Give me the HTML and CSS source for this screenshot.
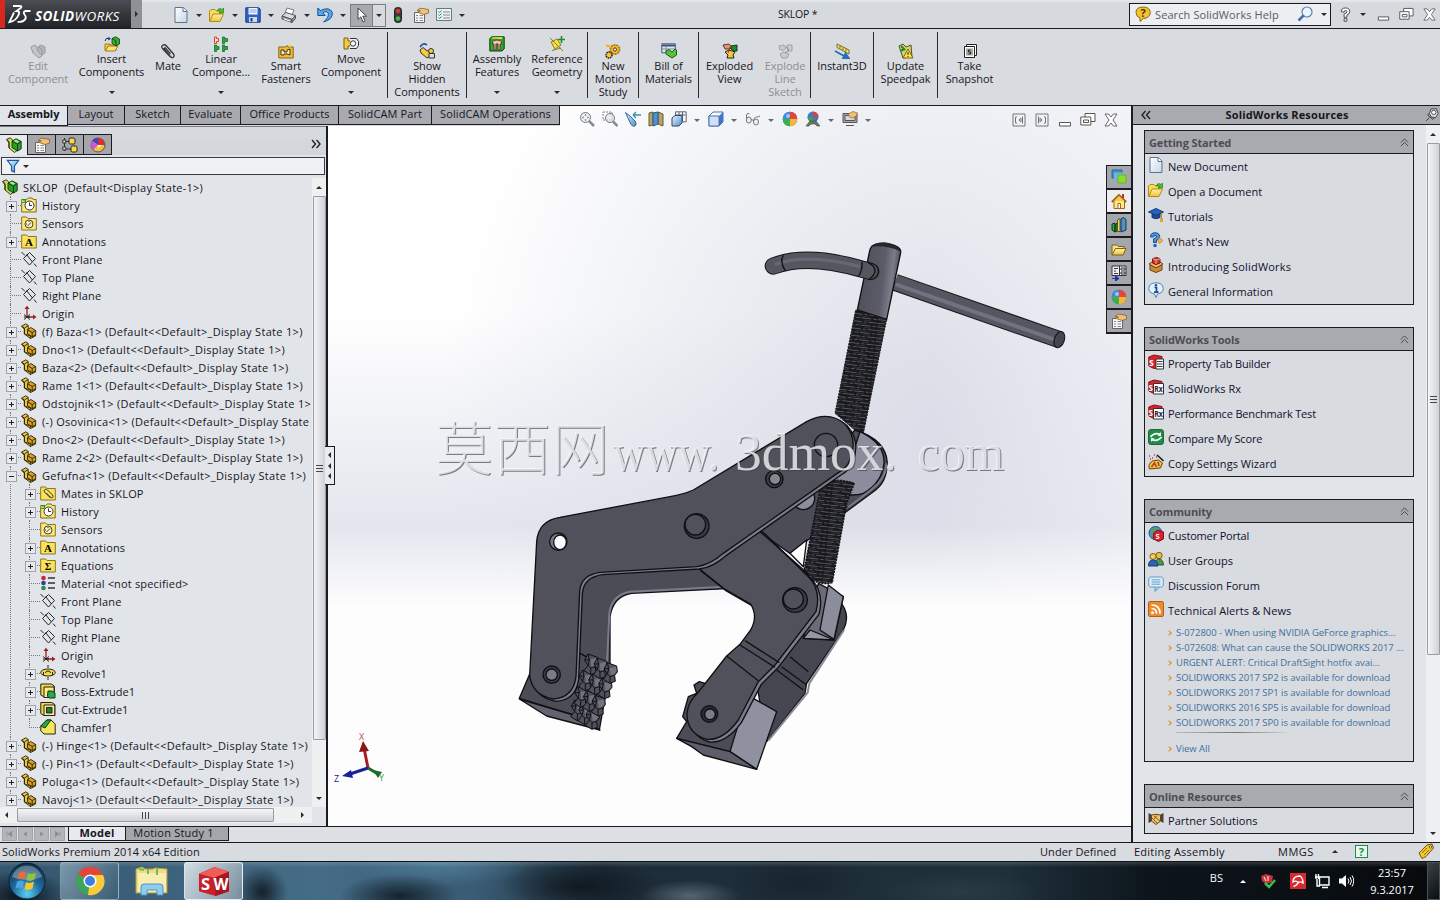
FILE: index.html
```html
<!DOCTYPE html>
<html lang="en">
<head>
<meta charset="UTF-8">
<meta name="viewport" content="width=device-width, initial-scale=1.0">
<title>SKLOP *</title>
<link rel="stylesheet" href="styles.css">
</head>
<body>

<svg class="paints">
  <defs>
    <linearGradient id="gBlue" x1="0" y1="0" x2="1" y2="1"><stop offset="0" stop-color="#e8f4ff"/><stop offset="1" stop-color="#4d8fd0"/></linearGradient>
    <linearGradient id="gPage" x1="0" y1="0" x2="1" y2="1"><stop offset="0" stop-color="#fff"/><stop offset="1" stop-color="#c4d6e8"/></linearGradient>
    <linearGradient id="gFold" x1="0" y1="0" x2="0" y2="1"><stop offset="0" stop-color="#fff3a8"/><stop offset="1" stop-color="#eec23e"/></linearGradient>
  </defs>
</svg>

<!-- icon set, 16x16 -->
<svg class="sprite">
  <symbol id="page" viewBox="0 0 16 16"><path d="M2 .5h8.500l3.500 3.500v11.500H2z" fill="url(#gPage)" stroke="#5b7390"/><path d="M10 .5V4.500h4" fill="#fff" stroke="#5b7390"/></symbol>
  <symbol id="open" viewBox="0 0 16 16"><path d="M.5 14V4l1.500-1.500h4L7.500 4H11v3" fill="#f7dc62" stroke="#b58a14"/><path d="M.8 14.500L4 7h10.500l-3.500 7.500z" fill="url(#gFold)" stroke="#b58a14"/><path d="M8 4q2-4 5-1.500l1.500-1.500v5H10l1.600-1.500Q10 2.800 8 4z" fill="#4fc02c" stroke="#2a7d12" stroke-width=".7"/></symbol>
  <symbol id="folder" viewBox="0 0 16 16"><path d="M1 14V4h5l1.500 1.500H13V8" fill="#f7e08a" stroke="#7d6310"/><path d="M1 14L4.500 7.500H15L12 14z" fill="url(#gFold)" stroke="#7d6310"/></symbol>
  <symbol id="save" viewBox="0 0 16 16"><path d="M.8.8h13l1.400 1.400v13H.8z" fill="#2f62c8" stroke="#163a86"/><path d="M3.500 1h9v6.500h-9z" fill="#eef4ff"/><path d="M4.500 3h7M4.500 5h7" stroke="#8fa6cc"/><path d="M4 10h8v5H4z" fill="#cfd8e8"/><path d="M5.500 11h2v3.500h-2z" fill="#163a86"/></symbol>
  <symbol id="print" viewBox="0 0 16 16"><path d="M4 6l2-5 7 2-2 5z" fill="#fff" stroke="#777"/><path d="M1 9l4-3.500 9.500 3-3.500 4z" fill="#d8dbe0" stroke="#555"/><path d="M1 9v3l10 3.500v-3zM11 12.500v3l3.500-4v-3z" fill="#9da3ad" stroke="#555"/><path d="M3 12l6 2" stroke="#fff"/></symbol>
  <symbol id="undo" viewBox="0 0 16 16"><path d="M.8 1v7.500h7.500L5.800 6Q10 3 11.300 6.500 12 10.500 6.500 15 16 12.500 15.300 5.500 12.500-.8 3.500 3.500z" fill="#5aa7e6" stroke="#1b549c"/></symbol>
  <symbol id="cursor" viewBox="0 0 16 16"><path d="M4 1v11.500l2.800-2.600 2.200 5 2-1-2.200-4.700H12.500z" fill="#fff" stroke="#444"/></symbol>
  <symbol id="light" viewBox="0 0 16 16"><rect x="4.500" y=".5" width="7" height="15" rx="3" fill="#3b3b3b" stroke="#222"/><circle cx="8" cy="4" r="2.200" fill="#e03a2f"/><circle cx="8" cy="11.500" r="2.200" fill="#3fbf4a"/></symbol>
  <symbol id="props" viewBox="0 0 16 16"><path d="M1.500 5.500h10v10h-10z" fill="#f4f6f8" stroke="#666"/><path d="M3 8.500h2M6.500 8.500H10M3 11h2M6.500 11H10M3 13.500h2M6.500 13.500H10" stroke="#888"/><path d="M4 3.500q3-3.500 6-2l5.500 1v3.500l-4.500 1.500L6.500 6q-2.500-1-1-1.500l2-.5z" fill="#f1c27a" stroke="#7d5216" stroke-width=".7"/></symbol>
  <symbol id="options" viewBox="0 0 16 16"><path d="M.5 1.500h15v12H.5z" fill="#e9f1ee" stroke="#5d7d83"/><path d="M2.500 4.500l1 1 2-2M2.500 7.500l1 1 2-2M2.500 10.500l1 1 2-2" stroke="#238080" fill="none"/><path d="M7 5h7M7 8h7M7 11h7" stroke="#888"/></symbol>
  <symbol id="lego" viewBox="0 0 16 16"><g stroke="#26210c" stroke-width=".9" stroke-linejoin="round"><path d="M.6 3.200L4.800.8l2.400 1.700v4.300l7.300 4.200v2L9.500 15.500 3.400 11V6.300z" fill="#f0c53c"/><path d="M.6 3.200l2.800 1.900v5.900l6 2v2.500M3.400 5.100l3.800-2.600" fill="none"/><path d="M6.500 6.800l3.200-2.300 5 3v4.200l-3.500 2-4.700-2.900z" fill="#dba325"/><path d="M6.500 6.800l4.700 2.700v4.200M11.200 9.500l3.500-2" fill="none"/></g></symbol>
  <symbol id="asm" viewBox="0 0 16 16"><g stroke="#1b2b0c" stroke-width=".9" stroke-linejoin="round"><path d="M.6 2.500l3.500-1.700 2.500 2v4l5 4V13L8.500 15.500 3 11V6z" fill="#cfdc55"/><path d="M.6 2.500L3 4.500V11" fill="none"/><path d="M6 4.200l4-2.400 5.200 2.700v7.300L11.500 14 6 10.500z" fill="#24a02c"/><path d="M6 4.200l5.500 3V14M11.500 7.200l3.700-2.700" fill="none"/></g><path d="M7.500 4L10 2.600 13.200 4.500 11.300 6z" fill="#a5e88a"/></symbol>
  <symbol id="editc" viewBox="0 0 16 16"><path d="M1 4l4-2 2 2v3l5 3v3l-3 2-6-5z" fill="#c3c5c9" stroke="#999"/><path d="M8 4l3-2 4 2v6l-3 2-4-3z" fill="#b4b7bb" stroke="#999"/><path d="M8 4l4 2v6" fill="none" stroke="#999"/></symbol>
  <symbol id="insert" viewBox="0 0 16 16"><path d="M1 14.500V8h5l1 1h5v5.500z" fill="#f5c945" stroke="#a37b10"/><path d="M1.500 15L4 10h10l-3 5z" fill="#ffe27a" stroke="#a37b10"/><path d="M8 2.500L11.500.8 15.500 3v5L12 10 8 7.500z" fill="#37ad37" stroke="#0b3d0b" stroke-width=".8"/><path d="M8 2.500l4 2.500v5" fill="none" stroke="#0b3d0b" stroke-width=".8"/><path d="M1 5q1-4 4-2.500" fill="none" stroke="#222"/><path d="M4.500.5L7 3 4 4.500z" fill="#1f47a8"/></symbol>
  <symbol id="clip" viewBox="0 0 16 16"><path d="M10 13.500L2.500 5.500Q1 3 3 2q1.800-.8 3.500 1l7 8q1.200 2-.2 3.200-1.500 1-3-.7L4.500 6.500q-.8-1.500.6-1.700L10.500 11" fill="none" stroke="#333" stroke-width="1.300"/></symbol>
  <symbol id="linear" viewBox="0 0 16 16"><path d="M1.500 1v6.500h2V5.500h2v-3h-2V1z" fill="#f7d9cf" stroke="#d8462a"/><path d="M9.500 1v6.500h2V5.500h3v-3h-3V1zM1.500 9v6.500h2v-2h2.500v-3H3.500V9zM9.500 9v6.500h2v-2h3v-3h-3V9z" fill="#2aa544" stroke="#14702a" stroke-width=".8"/></symbol>
  <symbol id="smart" viewBox="0 0 16 16"><path d="M.8 15V4h7L9 2.500l1 1.500h5.200v11z" fill="#f4b93a" stroke="#8d6410"/><path d="M3 7h3v2h3V7l3-1v6l-3-1H6v1H3z" fill="#fff1a0" stroke="#333"/><path d="M12 .5v4M10 2.500h4" stroke="#f7e04a"/></symbol>
  <symbol id="movec" viewBox="0 0 16 16"><path d="M1 2h4v3h3v5H5v3H1z" fill="#f5c945" stroke="#7d5f10"/><path d="M7 2.500h6.500l2 3v4l-2 3H7" fill="#eef0f2" stroke="#333"/><circle cx="10" cy="7.500" r="2.700" fill="#fff" stroke="#333"/></symbol>
  <symbol id="show" viewBox="0 0 16 16"><path d="M1 7l3-2.500 3 2.500 4 2v4l-3 2-6-5z" fill="#f5c945" stroke="#333"/><path d="M1 4q3-5 7-2" fill="none" stroke="#1f47a8" stroke-width="1.500"/><circle cx="12" cy="8" r="2.500" fill="#f5c945" stroke="#333"/><path d="M10 10.500h5.500v4.500H10z" fill="#ddd" stroke="#333"/></symbol>
  <symbol id="asmf" viewBox="0 0 16 16"><path d="M.8 2.500L3 .8h12.200v12L13 15H.8z" fill="#2ea52e" stroke="#0b3d0b"/><path d="M2 2.500L4 1.200h10L12.500 3z" fill="#f2e04a"/><path d="M3.500 6q0-2 4.500-2t4.500 2v2h-1.500v6h-2V8h-2v6H5V8H3.500z" fill="#e3c7b5" stroke="#6d3622"/></symbol>
  <symbol id="refg" viewBox="0 0 16 16"><path d="M2 6l6-3 4 6-6 4z" fill="#f4e14a" stroke="#8f7d15"/><path d="M1 2l13 13M12 12L3 14.500" stroke="#8f7d15"/><path d="M12.500 0v7M9 3.500h7" stroke="#1d8c33" stroke-width="1.600"/></symbol>
  <symbol id="gears" viewBox="0 0 16 16"><circle cx="10" cy="6.500" r="4.600" fill="#f7b92a" stroke="#a9720a" stroke-width="1.600" stroke-dasharray="2 .8"/><circle cx="10" cy="6.500" r="1.600" fill="#fff" stroke="#333"/><circle cx="4" cy="12" r="3" fill="#f7c33a" stroke="#222" stroke-width="1.500" stroke-dasharray="1.500 .7"/><path d="M1 2.500l4 1" stroke="#f2b10e" stroke-width="2"/></symbol>
  <symbol id="bom" viewBox="0 0 16 16"><path d="M.8.800h13.500v9H.8z" fill="#dfe5ec" stroke="#4a5a78"/><path d="M1 1.500h13v2H1z" fill="#38527f"/><path d="M1 6h13M5 3v7" stroke="#7a8aa5"/><path d="M5 8l3-1.500 3 2.500 3-3 1.500 1v5L11 15 5 11z" fill="#57c237" stroke="#155e12"/></symbol>
  <symbol id="explode" viewBox="0 0 16 16"><path d="M1 2l6-1 3 3-2 2H3z" fill="#e0977d" stroke="#632"/><path d="M9 3l6-1v6h-3l-3-2z" fill="#238a2b" stroke="#0b3d0b"/><path d="M3 9l4-2 6 2-2 3 1 3H5l1-3z" fill="#f3c93e" stroke="#222"/><path d="M8 4l-2 6" stroke="#c0261a"/></symbol>
  <symbol id="expline" viewBox="0 0 16 16"><path d="M2 3l5-1 2 3-2 2H3zM10 2h5v6h-4zM3 11l4-2 5 2-2 4H5z" fill="#c9cbce" stroke="#9fa1a5"/><path d="M9 4l3 3-4 3" stroke="#888" fill="none"/></symbol>
  <symbol id="instant" viewBox="0 0 16 16"><path d="M3 1l12 6v4L3 4.500z" fill="#f7e27a" stroke="#7b6a1c"/><path d="M6 3v2.500M9 4.500V7M12 6v2.500" stroke="#7b6a1c"/><path d="M1 8l9 5M11.500 10.500L15 15.500 9 15z" stroke="#2370b8" stroke-width="1.800" fill="#2370b8"/></symbol>
  <symbol id="speed" viewBox="0 0 16 16"><path d="M1 3l4-2 3 3 5-2 1 12-9 1z" fill="#d5cf7c" stroke="#55551e"/><path d="M3 3l4 4M2 8l5-2" stroke="#238a2b" stroke-width="2"/><path d="M10 6l5 9H5z" fill="#ffe14a" stroke="#7d6510"/><path d="M10 9v3M10 13v1" stroke="#222"/></symbol>
  <symbol id="snap" viewBox="0 0 16 16"><path d="M4.500 1.500h10v11h-10z" fill="#fff" stroke="#222"/><path d="M2.500 3.500h10v11h-10z" fill="#fff" stroke="#222"/><path d="M4 5.500h7v7H4z" fill="#9daaa2"/><path d="M8.500 7h-2v2h2v2h-2" stroke="#222" fill="none"/></symbol>
  <symbol id="cfg" viewBox="0 0 16 16"><path d="M2.500 1v13M2.500 4.500H8M2.500 12H10" stroke="#333" fill="none"/><path d="M.8 3h3v3h-3zM.8 10h3v3h-3z" fill="#ddd" stroke="#333"/><rect x="7" y="1" width="6" height="6" rx="1.500" fill="#f7d84a" stroke="#222"/><rect x="9" y="9" width="6" height="6" rx="1.500" fill="#f7d84a" stroke="#222"/></symbol>
  <symbol id="ball" viewBox="0 0 16 16"><circle cx="8" cy="8" r="7.300" fill="#3b78d8"/><path d="M8 8V.7A7.300 7.300 0 0 0 .7 8z" fill="#3f8be0"/><path d="M8 8V.7A7.300 7.300 0 0 1 15.300 8z" fill="#e4463a"/><path d="M8 8h7.300A7.300 7.300 0 0 1 8 15.300z" fill="#f3b73a"/><path d="M8 8v7.300A7.300 7.300 0 0 1 .7 8z" fill="#3cae4a"/><circle cx="6" cy="5" r="2" fill="#fff" opacity=".5"/></symbol>
  <symbol id="ball2" viewBox="0 0 16 16"><circle cx="8" cy="8" r="7" fill="#efc23a" stroke="#555"/><path d="M8 8L2 4a7 7 0 0 1 6-3z" fill="#4b3fc4"/><path d="M8 8V1a7 7 0 0 1 7 7z" fill="#d23030"/><path d="M2 4l6 4-5 5Q-.5 8 2 4z" fill="#c85ad0"/><path d="M8 8h4l-4 3z" fill="#fff"/></symbol>
  <symbol id="funnel" viewBox="0 0 16 16"><path d="M1.500 1.500h13L9.700 8v7l-3.400-1.500V8z" fill="url(#gBlue)" stroke="#1b5aa8" stroke-width="1.300"/></symbol>
  <symbol id="fhist" viewBox="0 0 16 16"><path d="M.7 15V2.500h5l1.500-1.500h4l1 1.500h3V15z" fill="#f9e77c" stroke="#7d6c14"/><circle cx="8.500" cy="8.500" r="4.500" fill="#fff" stroke="#333"/><path d="M8.500 5.500v3h2.500" stroke="#333" fill="none"/><path d="M1 2l4 3M4.500 2v3.500H1" stroke="#1d9c2c" fill="none"/></symbol>
  <symbol id="fsens" viewBox="0 0 16 16"><path d="M.7 15V2h5L7 3.500h8.300V15z" fill="#fbe57c" stroke="#8d7614"/><circle cx="8" cy="9" r="4" fill="#fdf3b8" stroke="#444"/><path d="M6.500 11l3.500-3.500M5 9h1M8 6v1" stroke="#333"/></symbol>
  <symbol id="fann" viewBox="0 0 16 16"><path d="M.7 15V2h5L7 3.500h8.300V15z" fill="#fbe25c" stroke="#8d7614"/><text x="8" y="13" text-anchor="middle" font-family="Liberation Serif, serif" font-weight="bold" font-size="11">A</text></symbol>
  <symbol id="feq" viewBox="0 0 16 16"><path d="M.7 15V2h5L7 3.500h8.300V15z" fill="#fbe25c" stroke="#8d7614"/><text x="8" y="13" text-anchor="middle" font-family="Liberation Serif, serif" font-weight="bold" font-size="10">Σ</text></symbol>
  <symbol id="fmate" viewBox="0 0 16 16"><path d="M.7 15V2h5L7 3.500h8.300V15z" fill="#fbe25c" stroke="#8d7614"/><path d="M10.500 13L4.500 7q-1-2 .5-2.700 1.300-.6 2.500.7l5 5q1 1.500 0 2.500-1.200.8-2.300-.5L6.500 8" fill="none" stroke="#333"/></symbol>
  <symbol id="plane" viewBox="0 0 16 16"><path d="M8.500 1.500l6 6-6 6.500-6-6.500z" fill="none" stroke="#222"/><path d="M.5 1l3.500 3.500M13 12.500l2.500 3M5.500 3.500l6 7.500" stroke="#222"/></symbol>
  <symbol id="origin" viewBox="0 0 16 16"><path d="M6 12V2M6 12h8" stroke="#a01c1c" stroke-width="1.300"/><path d="M3.500 4L6 .8 8.500 4zM12 9.500l3.500 2.500-3.500 2.500z" fill="#a01c1c"/><path d="M3 9.500l6 5M9 9.500l-6 5M3 12h6" stroke="#222"/></symbol>
  <symbol id="mat" viewBox="0 0 16 16"><circle cx="3.500" cy="3" r="2.300" fill="#c8283c"/><circle cx="3.500" cy="8" r="2.300" fill="#31418f"/><circle cx="3.500" cy="13" r="2.300" fill="#2a8b4c"/><path d="M8 3h7M8 8h7M8 13h7" stroke="#333" stroke-width="1.500"/></symbol>
  <symbol id="revolve" viewBox="0 0 16 16"><path d="M8 0v16" stroke="#222" stroke-dasharray="3 1"/><ellipse cx="8" cy="7.500" rx="7.300" ry="3.500" fill="#f3dc4a" stroke="#222"/><path d="M5.500 8q0-2 2.500-2t2.500 2M3.500 10V7M12.500 10V7" stroke="#222" fill="none"/></symbol>
  <symbol id="boss" viewBox="0 0 16 16"><path d="M.8 1h10.500l3 2v11h-10l-3.500-2z" fill="#f3d93e" stroke="#222"/><path d="M4 4h10v10.500H4z" fill="#faec8c" stroke="#222"/><path d="M8 8h4l3 2v5H9l-1.500-2z" fill="#2ea54e" stroke="#0b3d0b"/></symbol>
  <symbol id="cut" viewBox="0 0 16 16"><path d="M.8 1.500h11l3 2v11h-11l-3-2z" fill="#f3d93e" stroke="#222"/><path d="M4 4h10.800v10.500H4z" fill="#faec8c" stroke="#222"/><path d="M6.500 6.500h5.500v5.500H6.500z" fill="#257a3a" stroke="#222"/></symbol>
  <symbol id="chamfer" viewBox="0 0 16 16"><path d="M.8 7l6-6H11L15.200 5v10H4L.8 12z" fill="#f7e65a" stroke="#222"/><path d="M.8 7l6-6H11L5 9z" fill="#2ea54e" stroke="#0b3d0b"/></symbol>
  <symbol id="zoomfit" viewBox="0 0 16 16"><circle cx="6.500" cy="6.500" r="5" fill="#eef3f8" stroke="#777"/><path d="M10 10l5 5" stroke="#8a8a8a" stroke-width="2.500"/><path d="M6.500 3l1 1.500h-2zM6.500 10l1-1.500h-2zM3 6.500l1.500-1v2zM10 6.500l-1.500-1v2z" fill="#345"/></symbol>
  <symbol id="zoomarea" viewBox="0 0 16 16"><path d="M1 1h9v8H1z" fill="none" stroke="#888" stroke-dasharray="2 1"/><circle cx="8" cy="7" r="4.500" fill="#dde6f0" fill-opacity=".7" stroke="#777"/><path d="M11 10.500l4.500 4.500" stroke="#8a8a8a" stroke-width="2.500"/></symbol>
  <symbol id="prev" viewBox="0 0 16 16"><path d="M.5 1.500L5 5l5.500 5.500q1.500 3-.5 4.500-2.500.8-4-1.500L3 7z" fill="url(#gBlue)" stroke="#33679b"/><path d="M8 4h8M8 4l3-3M8 4l3 3" stroke="#3f8ea8" fill="none" stroke-width="1.300"/></symbol>
  <symbol id="section" viewBox="0 0 16 16"><path d="M1 2l4-1v13l-4 1zM10 1l5 2v12l-5-2z" fill="#b9a26a" stroke="#665a35"/><path d="M5 2l5-1v12l-5 2z" fill="#4d93cf" stroke="#265a8c"/></symbol>
  <symbol id="orient" viewBox="0 0 16 16"><path d="M4.500.8h10.700v10H4.500z" fill="#f4f5f8" stroke="#667"/><path d="M8 1v9M4.500 4h10M11.500 1v9" stroke="#667"/><path d="M1 7l3-2.500h7V12l-3 3H1z" fill="url(#gBlue)" stroke="#346"/></symbol>
  <symbol id="cube" viewBox="0 0 16 16"><path d="M1 5l4-4h10v10l-4 4H1z" fill="#f4f8ff" stroke="#5573a8"/><path d="M11 5l4-4v10l-4 4z" fill="#3f78c8"/><path d="M1 5h10v10H1z" fill="#cfe0f7" stroke="#5573a8"/></symbol>
  <symbol id="glasses" viewBox="0 0 16 16"><path d="M1.500 9V4q1-3 3-1M9 12V8q1-2 2.500-2t3.500-1" fill="none" stroke="#777"/><ellipse cx="3.800" cy="9" rx="2.500" ry="3" fill="#eef" stroke="#777"/><ellipse cx="11" cy="11" rx="2.500" ry="3" fill="#eef" stroke="#777"/><path d="M6 8.500l3 1" stroke="#777"/></symbol>
  <symbol id="scene" viewBox="0 0 16 16"><circle cx="8" cy="6" r="5.500" fill="#3f78d0"/><path d="M8 6V.5A5.500 5.500 0 0 1 13.500 6z" fill="#dd4433"/><path d="M2.500 6H8v5.500A5.500 5.500 0 0 1 2.500 6z" fill="#3aa548"/><path d="M1 15l4-5h6l4 5h-3l-2-2H6l-2 2z" fill="#6c7a5a" stroke="#444" stroke-width=".6"/></symbol>
  <symbol id="vset" viewBox="0 0 16 16"><path d="M1 2.500h14v9H1z" fill="#a9a9ae" stroke="#555"/><path d="M3 4.500h10v5H3zM4 14.500h8" fill="#d8d8dc" stroke="#555"/><path d="M6 3l5-2.500 4.500 1.500-1 3-4 2-3-1z" fill="#ecc07c" stroke="#7d5216" stroke-width=".6"/></symbol>
  <symbol id="wmin" viewBox="0 0 16 16"><path d="M2.500 10.500h11v3.500h-11z" fill="#fff" stroke="#555"/></symbol>
  <symbol id="wrest" viewBox="0 0 16 16"><path d="M5 1.500h10v8H5z" fill="#fff" stroke="#555"/><path d="M.8 5h10v8H.8z" fill="#fff" stroke="#555"/><path d="M3.500 8h5v2.500h-5z" fill="none" stroke="#555"/></symbol>
  <symbol id="wclose" viewBox="0 0 16 16"><path d="M2 2h3.500L8 5l2.500-3H14L10 8l4 6h-3.500L8 11l-2.500 3H2l4-6z" fill="#fff" stroke="#666"/></symbol>
  <symbol id="wpaneL" viewBox="0 0 16 16"><path d="M2 2h12v12H2z" fill="none" stroke="#777"/><path d="M6 5H4.500v6H6M8 8l2-2v4zM11.500 4.500v7" fill="none" stroke="#777"/></symbol>
  <symbol id="help" viewBox="0 0 16 16"><path d="M3.500 5Q3.500 1 8 1t4.500 4Q12.500 7.500 9.500 8.500V11h-3V7.500q3-.8 3-2.500 0-1.300-1.500-1.300T6.500 5.500zM6.500 12.500h3v2.700h-3z" fill="#fff" stroke="#444"/></symbol>
  <symbol id="helpq" viewBox="0 0 16 16"><path d="M1 6.500Q1 1 8 1t7.300 5.500Q15 12 8.500 12.500L5 15.500v-3.500Q1 10.500 1 6.500z" fill="#f2c230" stroke="#8d6a10"/><text x="8" y="11" text-anchor="middle" font-family="Open Sans, sans-serif" font-weight="bold" font-size="11" fill="#4d3408">?</text></symbol>
  <symbol id="lens" viewBox="0 0 16 16"><circle cx="10" cy="6" r="5" fill="#eaf5ff" stroke="#5684b4" stroke-width="1.200"/><path d="M6.500 9.500L1.500 14.500" stroke="#3f6fa5" stroke-width="2.500"/></symbol>
  <symbol id="pin" viewBox="0 0 16 16"><path d="M7 1h6l2 5-3 5-5-1-2-4z" fill="#e8e8ea" stroke="#333"/><path d="M5 6l-2 2 6 5 2-2M5 11l-4 4" stroke="#333" fill="none"/><circle cx="10" cy="5" r="2.500" fill="#fff" stroke="#333"/></symbol>
  <symbol id="cap" viewBox="0 0 16 16"><path d="M.5 5L8 1.500 15.500 5 9 8.500z" fill="#2a61bd" stroke="#143a7c"/><path d="M4 7v3.500q4 2.500 8 0V6.500L9 8.500z" fill="#1d4a9c" stroke="#143a7c"/><path d="M13.500 6v5" stroke="#c98016"/><path d="M12 11h3v4h-3z" fill="#e8a22c"/></symbol>
  <symbol id="whats" viewBox="0 0 16 16"><path d="M2.500 5Q2.500.8 7 .8t4.700 4Q11.500 7 8.500 8v2.500H5.500V7Q8.500 6 8.500 4.700 8.500 3.500 7 3.500 5.600 3.500 5.500 5z" fill="#4d97e0" stroke="#184a8f"/><circle cx="7" cy="13.500" r="1.800" fill="#2a61bd"/><path d="M11.500 5.500l3.500 3-3.500 3-2-3z" fill="#f3b24a" stroke="#b9741a" stroke-width=".6"/></symbol>
  <symbol id="box" viewBox="0 0 16 16"><path d="M2 8l6 2 6-2v5l-6 2.500L2 13z" fill="#c98a3a" stroke="#6d4312"/><path d="M1 7l3-2 4 2.500L12 5l3 2-6 3.500H7z" fill="#e8b76b" stroke="#6d4312"/><path d="M4.500 1.500L9 .5l3 1.500v4L8 7.500 4.500 6z" fill="#d23a2c" stroke="#7b150d"/><path d="M4.500 1.500L8 3v4M8 3l4-1" stroke="#f4a59d" fill="none"/></symbol>
  <symbol id="info" viewBox="0 0 16 16"><path d="M.8 6.500Q1 .8 8 .8t7.200 5.700Q15 11 9.500 12L8 15.500 6.500 12Q1 11 .8 6.500z" fill="#e6f1fb" stroke="#4d82b8"/><circle cx="8" cy="3.300" r="1.200" fill="#134a96"/><path d="M6.500 5.500H8.500V10M6 10.200h4.500" stroke="#134a96" stroke-width="1.700" fill="none"/></symbol>
  <symbol id="swtab" viewBox="0 0 16 16"><path d="M.8 3L6 1l8 1.500V13L6 14.500.8 12z" fill="#d3232c" stroke="#8a1015"/><text x="1" y="11.500" font-family="Open Sans, sans-serif" font-weight="bold" font-size="8.500" fill="#fff">S</text><path d="M8 5h7.500v10H8z" fill="#fff" stroke="#333"/><path d="M9 7.500h5.500M9 10h5.500M9 12.500h5.500" stroke="#333"/></symbol>
  <symbol id="swrx" viewBox="0 0 16 16"><path d="M.8 3L6 1l8 1.500V13L6 14.500.8 12z" fill="#d3232c" stroke="#8a1015"/><text x=".5" y="11.500" font-family="Open Sans, sans-serif" font-weight="bold" font-size="8" fill="#fff">S</text><path d="M5.500 4.500h10v10.500h-10z" fill="#fff" stroke="#333"/><text x="6.300" y="12.700" font-family="Open Sans, sans-serif" font-size="8" font-weight="bold" textLength="8.500" lengthAdjust="spacingAndGlyphs" fill="#24244a">Rx</text></symbol>
  <symbol id="score" viewBox="0 0 16 16"><rect x=".5" y=".5" width="15" height="15" rx="2.500" fill="#26884a" stroke="#1b6a38"/><path d="M2.500 8q4-5 10-2.500M13.500 8q-4 5-10 2.500" stroke="#e9fff0" stroke-width="1.700" fill="none"/><path d="M13 3v4H9.500zM3 13V9h3.500z" fill="#e9fff0"/></symbol>
  <symbol id="wizard" viewBox="0 0 16 16"><path d="M1.500 15q-2-5 3-8l6-1 4 3-2 5z" fill="#ecc13c" stroke="#6d4312"/><path d="M3.500 13l3-4 2 4M10 8l1 4" stroke="#c0392b" stroke-width="1.600" fill="none"/><path d="M9 1l6.500 6" stroke="#222" stroke-width="1.600"/><path d="M1 2h1M4 4h1M6 1h1M2 5h1M8 3h1" stroke="#c0392b" stroke-width="1.300"/></symbol>
  <symbol id="portal" viewBox="0 0 16 16"><circle cx="7.500" cy="7" r="6.500" fill="#4a93c8" stroke="#23547e"/><path d="M2 5q3-4 6-3-1 4-4 4zM4 12q1-4 4-3l1 4z" fill="#4ea646"/><path d="M5.500 7L10 4l5.500 2v7L10.500 15.500 5.500 13z" fill="#d3232c" stroke="#8a1015"/><text x="7.500" y="13" font-family="Open Sans, sans-serif" font-weight="bold" font-size="7.500" fill="#fff">S</text></symbol>
  <symbol id="users" viewBox="0 0 16 16"><circle cx="11" cy="4.500" r="3.200" fill="#e6bd44" stroke="#7d5f10"/><path d="M7 14q0-6 4-6t4.500 6z" fill="#4a9a4a" stroke="#2a5a2a"/><circle cx="5" cy="5.500" r="3" fill="#f2cf58" stroke="#7d5f10"/><path d="M.5 15q0-6 4.500-6t5 6z" fill="#2e63b8" stroke="#173a75"/></symbol>
  <symbol id="forum" viewBox="0 0 16 16"><rect x=".8" y="1" width="14.400" height="10" rx="2" fill="#e3f1fb" stroke="#5b9cc8"/><path d="M7 11v4.500L11.500 11" fill="#9cc9e8" stroke="#5b9cc8"/><path d="M3.500 3.800h9M3.500 6h9M3.500 8.200h9" stroke="#5b9cc8"/></symbol>
  <symbol id="rss" viewBox="0 0 16 16"><rect x=".5" y=".5" width="15" height="15" rx="1.500" fill="#ee8a2e" stroke="#b5601a"/><circle cx="4.500" cy="11.800" r="1.500" fill="#fff"/><path d="M3.500 7.500q5 0 5 5.300M3.500 4q8.500 0 8.500 8.800" stroke="#fff" stroke-width="1.700" fill="none"/></symbol>
  <symbol id="partner" viewBox="0 0 16 16"><path d="M.5 2l3 1.500v7L.5 12zM15.500 2l-3 1.500v7l3 1.500z" fill="#444"/><path d="M3.500 4q4.500-1.500 9 0v6L8 13.500 3.500 10z" fill="#eec46a" stroke="#6d4312"/><path d="M6 5l6 5M4 7l5 5M9 4.500L6 8" stroke="#6d4312" stroke-width=".8"/></symbol>
  <symbol id="layers" viewBox="0 0 16 16"><path d="M1 1h10v8H1z" fill="#3f8fc4" stroke="#2a6a96"/><path d="M3 3.500h10v8H3z" fill="#72b5dc"/><path d="M7 6h8v8H7z" fill="#8edb2f" stroke="#6db422"/></symbol>
  <symbol id="home" viewBox="0 0 16 16"><path d="M3 8v7.500h10.500V8" fill="#ffe68a" stroke="#a8670e"/><path d="M.8 9L8 2l7.200 7" fill="none" stroke="#9c5d0e" stroke-width="1.800"/><path d="M3 8l5-5 5.500 5z" fill="#f9c84a"/><path d="M7 10.500h2.500v5H7z" fill="#fff" stroke="#a8670e"/><path d="M12 1v4" stroke="#c03020" stroke-width="2"/></symbol>
  <symbol id="library" viewBox="0 0 16 16"><path d="M1 7l3-1v9l-3-2zM4 8l2-2v8l-2 1z" fill="#2ea54e" stroke="#0b3d0b"/><path d="M6.500 3L9 1.500v13H6.500z" fill="#f2da4a" stroke="#554"/><path d="M10 2l2.500-1.500L15 2.500V13l-5 2z" fill="#4a93c8" stroke="#234"/></symbol>
  <symbol id="palette" viewBox="0 0 16 16"><path d="M1 1h14v9.500H1z" fill="#eef" stroke="#333"/><path d="M8.500 1v9M3 3.500h4M3 6h2M3 8.500h4M10 3h4v2h-4zM10 7h4v2h-4z" stroke="#333" fill="none"/><path d="M1 13.500h5M4.500 11l3.500 2.500L4.500 16z" stroke="#1f2fb0" fill="#1f2fb0"/></symbol>
</svg>

<header class="titlebar">
  <div class="logo">
    <svg viewBox="0 0 24 22"><path d="M5 3h7q3 0 0 2.500L8.500 8q4 0 2 4-2.500 6-9 7L6 9.500M22.500 8H18q-3.500.5-1.500 3.500 2.500 3 0 5.500-2.500 2.500-7 1.800" fill="none" stroke="#fff" stroke-width="1.800"/></svg>
    <span class="logo-text"><b>SOLID</b>WORKS</span>
  </div>
  <div class="logo-arrow"><i class="tri right"></i></div>
  <nav class="quick">
    <svg><use href="#page"/></svg><i class="tri"></i>
    <svg><use href="#open"/></svg><i class="tri"></i>
    <svg><use href="#save"/></svg><i class="tri"></i>
    <svg><use href="#print"/></svg><i class="tri"></i>
    <svg><use href="#undo"/></svg><i class="tri"></i>
    <span class="select"><svg><use href="#cursor"/></svg></span><span class="select-drop"><i class="tri"></i></span>
    <svg class="q-light"><use href="#light"/></svg>
    <svg class="q-props"><use href="#props"/></svg>
    <svg><use href="#options"/></svg><i class="tri"></i>
  </nav>
  <div class="doc-title">SKLOP *</div>
  <div class="search"><svg><use href="#helpq"/></svg><span>Search SolidWorks Help</span><svg class="lens"><use href="#lens"/></svg><i class="tri"></i></div>
  <div class="winctl">
    <svg><use href="#help"/></svg><i class="tri"></i>
    <svg><use href="#wmin"/></svg>
    <svg><use href="#wrest"/></svg>
    <svg><use href="#wclose"/></svg>
  </div>
</header>

<div class="ribbon">
  <div class="cmd off"><svg><use href="#editc"/></svg>Edit<br>Component</div>
  <div class="cmd drop"><svg><use href="#insert"/></svg>Insert<br>Components<i class="tri"></i></div>
  <div class="cmd"><svg><use href="#clip"/></svg>Mate</div>
  <div class="cmd drop"><svg><use href="#linear"/></svg>Linear<br>Compone...<i class="tri"></i></div>
  <div class="cmd"><svg><use href="#smart"/></svg>Smart<br>Fasteners</div>
  <div class="cmd drop last"><svg><use href="#movec"/></svg>Move<br>Component<i class="tri"></i></div>
  <div class="cmd sep"><svg><use href="#show"/></svg>Show<br>Hidden<br>Components</div>
  <div class="cmd sep drop"><svg><use href="#asmf"/></svg>Assembly<br>Features<i class="tri"></i></div>
  <div class="cmd drop"><svg><use href="#refg"/></svg>Reference<br>Geometry<i class="tri"></i></div>
  <div class="cmd sep"><svg><use href="#gears"/></svg>New<br>Motion<br>Study</div>
  <div class="cmd sep"><svg><use href="#bom"/></svg>Bill of<br>Materials</div>
  <div class="cmd sep"><svg><use href="#explode"/></svg>Exploded<br>View</div>
  <div class="cmd off"><svg><use href="#expline"/></svg>Explode<br>Line<br>Sketch</div>
  <div class="cmd sep"><svg><use href="#instant"/></svg>Instant3D</div>
  <div class="cmd sep"><svg><use href="#speed"/></svg>Update<br>Speedpak</div>
  <div class="cmd sep"><svg><use href="#snap"/></svg>Take<br>Snapshot</div>
</div>

<main class="work">
  <section class="doc">
    <div class="doc-top">
      <div class="tabs">
        <span class="tab active">Assembly</span><span class="tab">Layout</span><span class="tab">Sketch</span><span class="tab">Evaluate</span><span class="tab">Office Products</span><span class="tab">SolidCAM Part</span><span class="tab">SolidCAM Operations</span>
      </div>
      <div class="headsup">
        <svg><use href="#zoomfit"/></svg>
        <svg><use href="#zoomarea"/></svg>
        <svg><use href="#prev"/></svg>
        <svg><use href="#section"/></svg>
        <svg><use href="#orient"/></svg><i class="tri"></i>
        <svg><use href="#cube"/></svg><i class="tri"></i>
        <svg><use href="#glasses"/></svg><i class="tri"></i>
        <svg><use href="#ball"/></svg>
        <svg><use href="#scene"/></svg><i class="tri"></i>
        <svg><use href="#vset"/></svg><i class="tri"></i>
      </div>
      <div class="docctl">
        <svg><use href="#wpaneL"/></svg>
        <svg class="flip"><use href="#wpaneL"/></svg>
        <svg><use href="#wmin"/></svg>
        <svg><use href="#wrest"/></svg>
        <svg><use href="#wclose"/></svg>
      </div>
    </div>

    <div class="doc-body">
      <aside class="manager">
        <div class="mtabs">
          <span class="mtab active"><svg><use href="#asm"/></svg></span><span class="mtab"><svg><use href="#props"/></svg></span><span class="mtab"><svg><use href="#cfg"/></svg></span><span class="mtab"><svg><use href="#ball2"/></svg></span>
          <svg class="chev" viewBox="0 0 10 10"><path d="M1 1l3.500 4L1 9M5.500 1L9 5 5.500 9" fill="none" stroke="#222" stroke-width="1.400"/></svg>
        </div>
        <div class="filter"><svg><use href="#funnel"/></svg><i class="tri"></i></div>
        <div class="tree-wrap">
          <ul class="tree">
            <li class="root"><svg><use href="#asm"/></svg>SKLOP&nbsp; (Default&lt;Display State-1&gt;)</li>
            <li class="plus"><svg><use href="#fhist"/></svg>History</li>
            <li><svg><use href="#fsens"/></svg>Sensors</li>
            <li class="plus"><svg><use href="#fann"/></svg>Annotations</li>
            <li><svg><use href="#plane"/></svg>Front Plane</li>
            <li><svg><use href="#plane"/></svg>Top Plane</li>
            <li><svg><use href="#plane"/></svg>Right Plane</li>
            <li><svg><use href="#origin"/></svg>Origin</li>
            <li class="plus part"><svg><use href="#lego"/></svg>(f) Baza&lt;1&gt; (Default&lt;&lt;Default&gt;_Display State 1&gt;)</li>
            <li class="plus part"><svg><use href="#lego"/></svg>Dno&lt;1&gt; (Default&lt;&lt;Default&gt;_Display State 1&gt;)</li>
            <li class="plus part"><svg><use href="#lego"/></svg>Baza&lt;2&gt; (Default&lt;&lt;Default&gt;_Display State 1&gt;)</li>
            <li class="plus part"><svg><use href="#lego"/></svg>Rame 1&lt;1&gt; (Default&lt;&lt;Default&gt;_Display State 1&gt;)</li>
            <li class="plus part"><svg><use href="#lego"/></svg>Odstojnik&lt;1&gt; (Default&lt;&lt;Default&gt;_Display State 1&gt;</li>
            <li class="plus part"><svg><use href="#lego"/></svg>(-) Osovinica&lt;1&gt; (Default&lt;&lt;Default&gt;_Display State</li>
            <li class="plus part"><svg><use href="#lego"/></svg>Dno&lt;2&gt; (Default&lt;&lt;Default&gt;_Display State 1&gt;)</li>
            <li class="plus part"><svg><use href="#lego"/></svg>Rame 2&lt;2&gt; (Default&lt;&lt;Default&gt;_Display State 1&gt;)</li>
            <li class="plus part minus"><svg><use href="#lego"/></svg>Gefufna&lt;1&gt; (Default&lt;&lt;Default&gt;_Display State 1&gt;)</li>
            <li class="sub plus"><svg><use href="#fmate"/></svg>Mates in SKLOP</li>
            <li class="sub plus"><svg><use href="#fhist"/></svg>History</li>
            <li class="sub"><svg><use href="#fsens"/></svg>Sensors</li>
            <li class="sub plus"><svg><use href="#fann"/></svg>Annotations</li>
            <li class="sub plus"><svg><use href="#feq"/></svg>Equations</li>
            <li class="sub"><svg><use href="#mat"/></svg>Material &lt;not specified&gt;</li>
            <li class="sub"><svg><use href="#plane"/></svg>Front Plane</li>
            <li class="sub"><svg><use href="#plane"/></svg>Top Plane</li>
            <li class="sub"><svg><use href="#plane"/></svg>Right Plane</li>
            <li class="sub"><svg><use href="#origin"/></svg>Origin</li>
            <li class="sub plus snug"><svg><use href="#revolve"/></svg>Revolve1</li>
            <li class="sub plus snug"><svg><use href="#boss"/></svg>Boss-Extrude1</li>
            <li class="sub plus snug"><svg><use href="#cut"/></svg>Cut-Extrude1</li>
            <li class="sub end"><svg><use href="#chamfer"/></svg>Chamfer1</li>
            <li class="plus part"><svg><use href="#lego"/></svg>(-) Hinge&lt;1&gt; (Default&lt;&lt;Default&gt;_Display State 1&gt;)</li>
            <li class="plus part"><svg><use href="#lego"/></svg>(-) Pin&lt;1&gt; (Default&lt;&lt;Default&gt;_Display State 1&gt;)</li>
            <li class="plus part"><svg><use href="#lego"/></svg>Poluga&lt;1&gt; (Default&lt;&lt;Default&gt;_Display State 1&gt;)</li>
            <li class="plus part"><svg><use href="#lego"/></svg>Navoj&lt;1&gt; (Default&lt;&lt;Default&gt;_Display State 1&gt;)</li>
          </ul>
          <div class="vscroll"><i class="tri up"></i><div class="thumb"><i class="grip"></i></div><i class="tri"></i></div>
        </div>
        <div class="hscroll"><i class="tri left"></i><div class="thumb"><i class="grip"></i></div><i class="tri right"></i></div>
        <div class="splitter"><i class="tri left"></i><i class="tri left"></i><i class="tri left"></i></div>
      </aside>

      <div class="graphics">
        <svg class="model" viewBox="328 126 803 700">
          <defs>
            <pattern id="thread" width="110" height="22" patternUnits="userSpaceOnUse" patternTransform="rotate(6)">
              <rect width="110" height="22" fill="#19191d"/>
              <path d="M0 4h38M44 4h12M60 4h30M96 4h10M0 15h22M28 15h34M68 15h8M82 15h26" stroke="#777883" stroke-width="2"/>
              <path d="M10 9.500h30M70 9.500h20M0 20.500h15M50 20.500h30" stroke="#3b3c45" stroke-width="2"/>
            </pattern>
            <linearGradient id="rod" x1="0" y1="0" x2="1" y2=".2"><stop offset="0" stop-color="#4b4c56"/><stop offset=".65" stop-color="#5b5c68"/><stop offset=".85" stop-color="#7b7c8a"/><stop offset="1" stop-color="#4b4c56"/></linearGradient>
            <g id="tooth"><path d="M-4 2L6-16 34-6 36 12 28 22 30 40 14 46-6 34 6 18z" fill="#50515a" stroke="#101014" stroke-width="3"/><path d="M6-16L10 2 6 18 14 26 14 46M10 2L-4 2M14 26L28 22" fill="none" stroke="#101014" stroke-width="3"/><path d="M13 0L32-4 33 10 26 19 16 22z" fill="#72737f" stroke="none"/></g>
            <path id="plate" d="M80 425Q85 362 150 352L480 290Q520 283 550 270L890 65Q955 30 1005 72Q1045 118 1020 180Q1010 205 985 218L640 460Q600 495 560 500L270 517Q212 525 209 575L198 830Q190 893 130 897Q65 885 59 825z"/>
            <path id="jaw" d="M565 505L640 460L755 393L895 530Q935 570 918 635L795 795L745 845L685 960Q640 1022 590 1018Q530 1000 531 940Q535 905 562 880L650 768L690 733L722 690Q745 650 722 612L640 565z"/>
          </defs>

          <!-- screw head and handle -->
          <g transform="translate(740 230) scale(.33333)">
            <path d="M465 157L958 329" stroke="#15151a" stroke-width="52"/>
            <path d="M465 157L955 328" stroke="#555661" stroke-width="46"/>
            <path d="M467 163L950 331" stroke="#7d7e8b" stroke-width="12" opacity=".7"/>
            <ellipse cx="958" cy="329" rx="15" ry="25" transform="rotate(19 958 329)" fill="#44454e" stroke="#111" stroke-width="3"/>
            <path d="M390 58Q395 38 440 40Q485 48 482 68L440 268L352 240z" fill="url(#rod)" stroke="#111" stroke-width="4"/>
            <path d="M395 50Q405 34 440 38Q480 46 480 64Q440 45 395 50z" fill="#26272d"/>
            <path d="M100 108Q200 70 360 116L392 124" fill="none" stroke="#15151a" stroke-width="52" stroke-linecap="round"/>
            <path d="M100 108Q200 70 360 116L390 124" fill="none" stroke="#55565f" stroke-width="46" stroke-linecap="round"/>
            <path d="M104 104Q200 68 360 110" fill="none" stroke="#676873" stroke-width="10"/>
            <path d="M130 76Q118 95 136 122M366 95Q368 120 356 138M385 98Q425 120 385 150" fill="none" stroke="#111" stroke-width="4"/>
            <path d="M347 240L440 268L368 620L285 550z" fill="url(#thread)" stroke="#111" stroke-width="3" stroke-dasharray="6 3"/>
          </g>

          <g transform="translate(510 400) scale(.33333)" stroke="#101014" stroke-width="4" stroke-linejoin="round">
            <!-- rear arm -->
            <path d="M1035 90Q1130 120 1132 190Q1130 250 1090 275L840 460L740 390L930 200z" fill="#4b4c55"/>
            <path d="M1050 95Q1125 130 1122 190Q1115 250 1060 280Q1000 300 930 240L1015 200z" fill="#8c8d9c"/>
            <path d="M1130 190Q1128 235 1085 268L1015 322" fill="none" stroke="#777886" stroke-width="6"/>
            <circle cx="880" cy="295" r="34" fill="#8c8d9c"/>
            <path d="M565 505L270 522Q222 530 216 580L206 760L300 800L300 650Q310 588 365 580L650 566z" fill="#4b4c55"/>
            <path d="M291 790L298 640Q305 585 360 575L640 560" fill="none" stroke="#7b7c8a" stroke-width="6"/>
            <path d="M840 460L890 420L880 500z" fill="#fdfdfd"/>

            <!-- right jaw, back side -->
            <path d="M985 600Q1025 640 1000 690L890 850L885 880L770 1025L740 850L850 690z" fill="#45464f"/>
            <path d="M1002 690L898 850L893 878L775 1022" fill="none" stroke="#8a8b99" stroke-width="6"/>
            <path d="M800 810L880 870M840 770L895 815M815 800L890 855" fill="none"/>
            <path d="M925 550L1000 590L972 720L880 715z" fill="#6b6c78"/>
            <path d="M955 555L1000 590L972 718L930 690z" fill="#8c8d9c"/>
            <path d="M900 690L972 720L880 715z" fill="#9798a6"/>
            <path d="M935 243Q990 235 1033 250L1010 310L967 548Q920 560 880 520z" fill="url(#thread)" stroke-dasharray="6 3"/>

            <!-- jaw blocks -->
            <path d="M500 1015L530 965L518 950L535 890L560 880L552 855L568 845L600 855L700 950L730 895L660 1055z" fill="#4b4c55"/>
            <path d="M730 895L800 935L740 1108L660 1055L692 950z" fill="#8f90a0"/>
            <path d="M500 1015L660 1055L740 1108L580 1065L545 1040z" fill="#5d5e69"/>
            <path d="M28 895L60 820L210 760L300 810L268 990L190 945z" fill="#4b4c55"/>
            <path d="M28 897L190 945L270 990L110 948z" fill="#62636e"/>

            <use href="#jaw" transform="translate(9 8)" fill="#7b7c8a"/>
            <use href="#jaw" fill="#50515a"/>
            <path d="M690 735L795 802M705 722L808 788M650 768L745 842M750 395L895 522M565 505L640 565" fill="none"/>
            <use href="#plate" transform="translate(8 7)" fill="#7b7c8a"/>
            <use href="#plate" fill="#50515a"/>

            <circle cx="560" cy="378" r="37" fill="#3a3b43"/><circle cx="556" cy="374" r="31" fill="#50515a"/>
            <circle cx="793" cy="237" r="26" fill="#3a3b43"/><circle cx="795" cy="237" r="17" fill="#85868f"/>
            <circle cx="948" cy="135" r="35" fill="#50515a"/>
            <circle cx="145" cy="425" r="26" fill="#7b7c8a"/><ellipse cx="150" cy="427" rx="19" ry="22" fill="#fafafc"/>
            <circle cx="125" cy="824" r="26" fill="#3a3b43"/><circle cx="125" cy="824" r="17" fill="#7b7c85"/>
            <circle cx="855" cy="600" r="37" fill="#3a3b43"/><circle cx="850" cy="597" r="30" fill="#50515a"/>
            <circle cx="598" cy="942" r="25" fill="#2b2c32"/><circle cx="600" cy="943" r="16" fill="#7b7c85"/>

            <g>
              <use href="#tooth" x="188" y="916"/><use href="#tooth" x="210" y="928"/><use href="#tooth" x="232" y="942"/>
              <use href="#tooth" x="198" y="876"/><use href="#tooth" x="224" y="888"/><use href="#tooth" x="250" y="902"/>
              <use href="#tooth" x="212" y="826"/><use href="#tooth" x="240" y="838"/><use href="#tooth" x="270" y="850"/>
              <use href="#tooth" x="228" y="778"/><use href="#tooth" x="256" y="790"/><use href="#tooth" x="286" y="804"/>
            </g>
          </g>

          <!-- triad -->
          <g stroke-width="3">
            <path d="M368 768L364 748" stroke="#a32020"/><path d="M359 752l4-11 6 10z" fill="#8a1616"/>
            <path d="M368 768L350 774" stroke="#1b1f9c"/><path d="M342 776l9-6 2 8z" fill="#1b1f9c"/>
            <path d="M368 768L378 774" stroke="#1d6b24"/><path d="M373 770l9 2-4 6z" fill="#1d6b24"/>
          </g>
          <g class="axis"><text x="359" y="740" fill="#c04a4a">X</text><text x="334" y="782" fill="#1b1f6c">Z</text><text x="379" y="781" fill="#3a9a3a">Y</text></g>

          <g class="watermark">
            <text class="cjk" x="435" y="470">莫西网</text>
            <text x="613" y="470" textLength="106" lengthAdjust="spacingAndGlyphs">www.</text>
            <text x="735" y="470" textLength="162" lengthAdjust="spacingAndGlyphs">3dmox.</text>
            <text x="917" y="470" textLength="87" lengthAdjust="spacingAndGlyphs">com</text>
          </g>
        </svg>

        <div class="sidetabs">
          <span><svg><use href="#layers"/></svg></span><span class="active"><svg><use href="#home"/></svg></span><span><svg><use href="#library"/></svg></span><span><svg><use href="#folder"/></svg></span><span><svg><use href="#palette"/></svg></span><span><svg><use href="#ball"/></svg></span><span><svg><use href="#props"/></svg></span>
        </div>
      </div>
    </div>

    <div class="doc-bottom">
      <div class="steps">
        <svg viewBox="0 0 15 14"><path d="M4.500 4v6M10 4v6L6 7z" fill="#8a8c92" stroke="#8a8c92"/></svg>
        <svg viewBox="0 0 15 14"><path d="M9 4v6L5 7z" fill="#8a8c92"/></svg>
        <svg viewBox="0 0 15 14"><path d="M6 4v6l4-3z" fill="#8a8c92"/></svg>
        <svg viewBox="0 0 15 14"><path d="M10.500 4v6M5 4v6l4-3z" fill="#8a8c92" stroke="#8a8c92"/></svg>
      </div>
      <span class="btab active">Model</span><span class="btab">Motion Study 1</span>
    </div>
  </section>

  <aside class="taskpane">
    <div class="pane-head">
      <svg class="chev" viewBox="0 0 10 10"><path d="M4.500 1L1 5l3.500 4M9 1L5.500 5 9 9" fill="none" stroke="#222" stroke-width="1.400"/></svg>
      <span>SolidWorks Resources</span>
      <svg class="pin"><use href="#pin"/></svg>
    </div>
    <div class="pane-body">
      <div class="cards">
        <div class="card">
          <h3>Getting Started<svg viewBox="0 0 10 10"><path d="M1 5l4-4 4 4M1 9l4-4 4 4" fill="none" stroke="#444"/></svg></h3>
          <a><svg><use href="#page"/></svg>New Document</a>
          <a><svg><use href="#open"/></svg>Open a Document</a>
          <a><svg><use href="#cap"/></svg>Tutorials</a>
          <a><svg><use href="#whats"/></svg>What's New</a>
          <a class="wide"><svg><use href="#box"/></svg>Introducing SolidWorks</a>
          <a><svg><use href="#info"/></svg>General Information</a>
        </div>
        <div class="card">
          <h3>SolidWorks Tools<svg viewBox="0 0 10 10"><path d="M1 5l4-4 4 4M1 9l4-4 4 4" fill="none" stroke="#444"/></svg></h3>
          <a class="tight"><svg><use href="#swtab"/></svg>Property Tab Builder</a>
          <a><svg><use href="#swrx"/></svg>SolidWorks Rx</a>
          <a class="tight"><svg><use href="#swrx"/></svg>Performance Benchmark Test</a>
          <a class="tight"><svg><use href="#score"/></svg>Compare My Score</a>
          <a><svg><use href="#wizard"/></svg>Copy Settings Wizard</a>
        </div>
        <div class="card community">
          <h3>Community<svg viewBox="0 0 10 10"><path d="M1 5l4-4 4 4M1 9l4-4 4 4" fill="none" stroke="#444"/></svg></h3>
          <a class="tight"><svg><use href="#portal"/></svg>Customer Portal</a>
          <a><svg><use href="#users"/></svg>User Groups</a>
          <a><svg><use href="#forum"/></svg>Discussion Forum</a>
          <a><svg><use href="#rss"/></svg>Technical Alerts &amp; News</a>
          <ul class="news">
            <li>S-072800 - When using NVIDIA GeForce graphics...</li>
            <li>S-072608: What can cause the SOLIDWORKS 2017 ...</li>
            <li>URGENT ALERT: Critical DraftSight hotfix avai...</li>
            <li>SOLIDWORKS 2017 SP2 is available for download</li>
            <li>SOLIDWORKS 2017 SP1 is available for download</li>
            <li>SOLIDWORKS 2016 SP5 is available for download</li>
            <li>SOLIDWORKS 2017 SP0 is available for download</li>
            <li class="all">View All</li>
          </ul>
        </div>
        <div class="card">
          <h3>Online Resources<svg viewBox="0 0 10 10"><path d="M1 5l4-4 4 4M1 9l4-4 4 4" fill="none" stroke="#444"/></svg></h3>
          <a><svg><use href="#partner"/></svg>Partner Solutions</a>
        </div>
      </div>
      <div class="vscroll"><i class="tri up"></i><div class="thumb"><i class="grip"></i></div><i class="tri"></i></div>
    </div>
  </aside>
</main>

<footer class="status">
  <span class="edition">SolidWorks Premium 2014 x64 Edition</span>
  <span class="s-def">Under Defined</span>
  <span class="s-edit">Editing Assembly</span>
  <span class="s-unit">MMGS</span>
  <i class="tri up"></i>
  <span class="s-help">?</span>
  <svg class="tag" viewBox="0 0 16 16"><path d="M1 10L9 2l5-1 1.500 4L8 13.500l-4 2z" fill="#f2c92e" stroke="#6d5410"/><circle cx="12.500" cy="4" r="1.200" fill="#fff" stroke="#6d5410"/><path d="M4 10l5-5M6 12l5-5" stroke="#8d6a10"/></svg>
</footer>

<div class="taskbar">
  <svg class="orb" viewBox="0 0 38 38">
    <defs><radialGradient id="orb" cx=".5" cy=".85" r=".8"><stop offset="0" stop-color="#59d0f2"/><stop offset=".5" stop-color="#1f6a9c"/><stop offset="1" stop-color="#123350"/></radialGradient></defs>
    <circle cx="19" cy="19" r="18" fill="url(#orb)" stroke="#0b2236"/>
    <path d="M4 15A15.500 15.500 0 0 1 34 15Q19 21 4 15z" fill="#fff" opacity=".3"/>
    <path d="M11 11q3-2.500 7-.5l-1.500 7q-3.500-2-7 0z" fill="#ec6b34"/><path d="M20 11q4 2 8-.5l-1.500 7q-4 2.500-8 .5z" fill="#8cc63f"/><path d="M9 19.500q3.500-2 7 0l-1.500 7q-3.500-2-7 0z" fill="#4aa5e0"/><path d="M18 20q4 2 8-.5l-1.500 7q-4 2.500-8 .5z" fill="#f8c52c"/>
  </svg>
  <div class="app"><svg viewBox="0 0 30 30"><circle cx="15" cy="15" r="14" fill="#e0473a"/><path d="M15 15L3 8A14 14 0 0 0 13 29l6-10z" fill="#3ba55a"/><path d="M15 15l-2 14A14 14 0 0 0 28 9H17z" fill="#f7cb3a"/><path d="M3 8A14 14 0 0 1 28 9H15z" fill="#e0473a"/><circle cx="15" cy="15" r="6.500" fill="#fff"/><circle cx="15" cy="15" r="5" fill="#3f7fe0"/></svg></div>
  <div class="app bare"><svg class="explorer" viewBox="0 0 34 30"><path d="M1 27V3l6-2 3 2h8l2-1 12 1v24z" fill="#f0dc88" stroke="#b59a45"/><path d="M3 7h28v19H3z" fill="#f9edb0"/><path d="M4 3l5 1M13 3v5M22 3v6" stroke="#6bbf59" stroke-width="2"/><path d="M6 29V21q0-3 3-3h16q3 0 3 3v8h-6v-5H12v5z" fill="#8fcdf0" stroke="#4a93c8"/></svg></div>
  <div class="app on"><svg class="sw" viewBox="0 0 34 32"><path d="M2 8L18 1l15 5v20l-14 5L2 26z" fill="#c8202a"/><path d="M2 8L18 1l15 5-15 6z" fill="#ee5d58"/><path d="M18 12L33 6v20l-14 5z" fill="#a8151e"/><text x="4" y="25" class="sw-s">S</text><text x="17" y="25" class="sw-w">W</text></svg></div>
  <div class="tray">
    <span class="lang">BS</span>
    <i class="tri up"></i>
    <svg class="t-sw" viewBox="0 0 16 16"><path d="M1 3l5-2 7 2-1 6-6 2-4-3z" fill="#c8323a"/><path d="M4 4l2 4M8 3v5" stroke="#fff"/><path d="M5 10l4 4 6-7" stroke="#35c04a" stroke-width="2.500" fill="none"/></svg>
    <svg class="t-av" viewBox="0 0 16 16"><path d="M0 0h16v16H0z" fill="#d62a30"/><path d="M3 9q0-6 7-6 3 2 3 7-3-2-4.500-.5Q6 7 3 9zM8.500 9.500Q6 13 3.500 13.500" fill="none" stroke="#fff" stroke-width="1.400"/></svg>
    <svg class="t-net" viewBox="0 0 16 16"><path d="M5.500 4h9.500v8H5.500zM8 14.500h6M2 1v5M4.500 1v5M1 4h5M3 6v7h3" fill="none" stroke="#fff" stroke-width="1.400"/></svg>
    <svg class="t-vol" viewBox="0 0 16 16"><path d="M1 5.500h3L8 2v12l-4-3.500H1z" fill="#fff"/><path d="M10 5.500q2 2.500 0 5M12 4q3 4 0 8M14 2.500q3.500 5.500 0 11" fill="none" stroke="#fff"/></svg>
    <div class="clock">23:57<br>9.3.2017</div>
    <div class="peek"></div>
  </div>
</div>

</body>
</html>
```

FILE: styles.css
```css
* {
    box-sizing: border-box;
}

body {
    margin: 0;
    width: 1440px;
    height: 900px;
    overflow: hidden;
    display: flex;
    flex-direction: column;
    font-family: "Open Sans", "Noto Sans", sans-serif;
    font-size: 11px;
    color: #16161c;
    background: #d8dbe0;
    white-space: nowrap;
}

svg {
    width: 16px;
    height: 16px;
    flex: none;
    display: block;
}

.paints {
    position: absolute;
    width: 0;
    height: 0;
}

.sprite {
    display: none;
}

ul {
    list-style: none;
    margin: 0;
    padding: 0;
}

.tri {
    width: 0;
    height: 0;
    flex: none;
    border: 3px solid transparent;
    border-top-color: #2a2a2e;
    border-bottom-width: 0;
}
.tri.up {
    border: 3px solid transparent;
    border-bottom-color: #2a2a2e;
    border-top-width: 0;
}
.tri.left {
    border: 3px solid transparent;
    border-right-color: #2a2a2e;
    border-left-width: 0;
}
.tri.right {
    border: 3px solid transparent;
    border-left-color: #2a2a2e;
    border-right-width: 0;
}

/* title bar */
.titlebar {
    height: 29px;
    display: flex;
    align-items: center;
    border-bottom: 1px solid #1c1c20;
    background: linear-gradient(#e9ebee 0, #d6dade 3px);
}
.titlebar > * {
    flex: none;
}
.logo {
    width: 131px;
    height: 28px;
    padding-left: 3px;
    border-left: 5px solid #d8281e;
    display: flex;
    align-items: center;
    background: linear-gradient(#4a4e54, #1f2226);
    color: #fff;
}
.logo svg {
    width: 24px;
    height: 22px;
}
.logo-text {
    margin: 4px 0 0 3px;
    font-size: 13.5px;
    font-style: italic;
    letter-spacing: .4px;
}
.logo-arrow {
    width: 11px;
    height: 28px;
    display: flex;
    align-items: center;
    justify-content: center;
    background: #8f9196;
}
.quick {
    width: 560px;
    margin-left: 31px;
    padding-top: 2px;
    display: flex;
    align-items: center;
}
.quick > .tri {
    margin: 0 7px;
}
.select,
.select-drop {
    height: 23px;
    display: flex;
    align-items: center;
    justify-content: center;
    border: 1px solid #7a7c82;
}
.select {
    width: 23px;
    margin-left: -3px;
    background: #a7a9af;
}
.select-drop {
    width: 13px;
    border-left: none;
}
.q-light {
    margin: 0 7px 0 4px;
}
.q-props {
    margin-right: 7px;
}
.doc-title {
    width: 397px;
    padding-left: 45px;
    font-size: 10.5px;
    letter-spacing: -.2px;
}
.search {
    width: 202px;
    height: 23px;
    padding-left: 5px;
    margin-left: -1px;
    display: flex;
    align-items: center;
    border: 1px solid #1c1c20;
    background: #eceef1;
    color: #5a5c64;
}
.search span {
    width: 123px;
    margin: 0 19px 0 4px;
    letter-spacing: .1px;
}
.search .tri {
    margin-left: 8px;
}
.winctl {
    display: flex;
    align-items: center;
    margin-left: 7px;
}
.winctl .tri {
    margin: 0 10px 0 7px;
}
.winctl svg {
    margin-right: 8px;
    width: 15px;
    height: 15px;
}
.winctl svg:first-child,
.winctl svg:last-child {
    margin-right: 0;
}

/* command ribbon */
.ribbon {
    height: 76px;
    padding-top: 3px;
    display: grid;
    grid-template-columns: 76px 71px 42px 64px 66px 68px 79px 61px 60px 51px 60px 62px 50px 63px 64px 64px;
    grid-template-rows: 66px;
    background: #d8dbe0;
}
.cmd {
    padding-top: 11px;
    text-align: center;
    line-height: 13px;
    letter-spacing: -.05px;
}
.cmd svg {
    margin: 0 auto;
}
.cmd.drop {
    padding-top: 4px;
}
.cmd.last {
    padding-right: 4px;
}
.cmd .tri {
    display: block;
    margin: 13px auto 0;
}
.cmd.sep {
    border-left: 1px solid #2a2a2e;
}
.cmd.off {
    color: #8c8e94;
}

.work {
    height: 738px;
    display: flex;
    border-top: 1px solid #1c1c20;
    border-bottom: 1px solid #1c1c20;
}

/* document window */
.doc {
    width: 1131px;
    display: flex;
    flex-direction: column;
    background:
        linear-gradient(rgba(253, 253, 254, 0) 57%, #fdfdfe 68%),
        linear-gradient(to left, rgba(240, 241, 247, .5), rgba(240, 241, 247, 0) 200px),
        radial-gradient(ellipse 500px 580px at 940px 330px, #dadde7, rgba(218, 221, 231, 0)),
        linear-gradient(#fff 28%, #e4e6ee 57%);
}
.doc-top {
    height: 20px;
    display: flex;
}
.tabs {
    width: 560px;
    display: flex;
    background: #d8dbe0;
}
.tab {
    height: 19px;
    line-height: 16px;
    text-align: center;
    letter-spacing: .1px;
    background: #a9aab0;
    border-right: 1px solid #1c1c20;
    border-bottom: 1px solid #1c1c20;
}
.tab:nth-child(1) { width: 68px; }
.tab:nth-child(2) { width: 57px; }
.tab:nth-child(3) { width: 56px; }
.tab:nth-child(4) { width: 60px; }
.tab:nth-child(5) { width: 98px; }
.tab:nth-child(6) { width: 93px; }
.tab:nth-child(7) { width: 128px; }
.tab.active {
    height: 20px;
    background: #e1e4e9;
    font-weight: bold;
    letter-spacing: -.1px;
}
.headsup {
    width: 440px;
    height: 26px;
    padding-left: 19px;
    display: flex;
    align-items: center;
}
.headsup svg {
    margin-right: 7px;
}
.headsup .tri {
    margin: 2px 8px 0 0;
    border-top-color: #66686e;
}
.docctl {
    height: 27px;
    margin-left: 11px;
    display: flex;
    align-items: center;
    gap: 7px;
}
.docctl .flip {
    transform: scaleX(-1);
}
.doc-body {
    height: 700px;
    display: flex;
}

/* feature manager */
.manager {
    position: relative;
    width: 328px;
    display: flex;
    flex-direction: column;
    background: #e1e5ea;
    border-right: 2px solid #1c1c20;
}
.mtabs {
    height: 29px;
    padding-top: 7px;
    display: flex;
    border-top: 1px solid #777a82;
    background: linear-gradient(#d8dbe0, #d2d5da);
}
.mtab {
    width: 28px;
    height: 21px;
    display: flex;
    align-items: center;
    justify-content: center;
    border: 1px solid #1c1c20;
    border-left-width: 0;
    background: #a4a6ac;
}
.mtab.active {
    border-bottom: none;
    background: #e6e9ed;
}
.chev {
    width: 10px;
    height: 10px;
}
.mtabs .chev {
    margin: 5px 5px 0 auto;
}
.filter {
    height: 18px;
    margin: 2px 1px 0;
    padding-left: 4px;
    display: flex;
    align-items: center;
    border: 1px solid #3a3a40;
    background: #eff1f3;
}
.filter svg {
    width: 14px;
    height: 14px;
}
.filter .tri {
    margin-left: 3px;
}
.tree-wrap {
    height: 632px;
    padding-top: 3px;
    display: flex;
    overflow: hidden;
}
.tree {
    width: 312px;
    overflow: hidden;
    letter-spacing: .17px;
}
.tree li {
    position: relative;
    height: 18px;
    padding-left: 21px;
    display: flex;
    align-items: center;
}
.tree li svg {
    margin-right: 5px;
}
.tree li.root {
    padding-left: 2px;
    letter-spacing: .25px;
}
.tree li.part {
    letter-spacing: .31px;
}
.tree li.sub {
    padding-left: 40px;
}
.tree li.snug {
    letter-spacing: 0;
}
/* dotted guides */
.tree li:not(.root)::before {
    content: "";
    position: absolute;
    left: 10px;
    top: 0;
    width: 10px;
    height: 9px;
    border-left: 1px dotted #777;
    border-bottom: 1px dotted #777;
}
.tree li:not(.root)::after {
    content: "";
    position: absolute;
    left: 10px;
    top: 9px;
    height: 9px;
    border-left: 1px dotted #777;
}
.tree li.sub::before {
    left: 29px;
}
.tree li.sub::after {
    left: 29px;
}
.tree li.sub.end::after {
    display: none;
}
.tree li.sub {
    background: repeating-linear-gradient(#777 0 1px, transparent 1px 2px) 10px 0 / 1px 100% no-repeat;
}
.tree li.plus::after {
    left: 6px;
    top: 5px;
    width: 9px;
    height: 9px;
    border: 1px solid #a0a2a8;
    background:
        linear-gradient(#222, #222) center / 5px 1px no-repeat,
        linear-gradient(#222, #222) center / 1px 5px no-repeat,
        #e6e9ed;
}
.tree li.sub.plus::after {
    left: 25px;
}
.tree li.minus::after {
    background: linear-gradient(#222, #222) center / 5px 1px no-repeat, #e6e9ed;
}

.vscroll {
    width: 14px;
    display: flex;
    flex-direction: column;
    align-items: center;
    justify-content: space-between;
    background: #eef0f2;
}
.thumb {
    display: flex;
    align-items: center;
    justify-content: center;
    border: 1px solid #9a9ca2;
    border-radius: 1px;
}
.vscroll .thumb {
    width: 13px;
    background: linear-gradient(to right, #f6f6f8, #cfd1d6);
}
.grip {
    width: 7px;
    height: 7px;
    background: repeating-linear-gradient(#44464c 0 1px, transparent 1px 3px);
}
.tree-wrap .vscroll {
    height: 629px;
    padding: 8px 0 7px;
}
.tree-wrap .vscroll .thumb {
    height: 544px;
    margin: 7px 0 auto;
}
.hscroll {
    height: 16px;
    margin-right: 14px;
    padding: 0 6px 0 5px;
    display: flex;
    align-items: center;
    background: #eef0f2;
}
.hscroll .thumb {
    width: 257px;
    height: 14px;
    margin: 0 27px 0 9px;
    background: linear-gradient(#f6f6f8, #cfd1d6);
}
.hscroll .grip {
    background: repeating-linear-gradient(to right, #44464c 0 1px, transparent 1px 3px);
}
/* handle that hides the manager */
.splitter {
    position: absolute;
    z-index: 2;
    left: 325px;
    top: 320px;
    width: 10px;
    height: 39px;
    display: flex;
    flex-direction: column;
    align-items: center;
    justify-content: space-evenly;
    border: 1px solid #1c1c20;
    border-left: none;
    background: #e9ebef;
}

/* graphics area */
.graphics {
    position: relative;
    width: 803px;
}
.model {
    width: 803px;
    height: 700px;
}
.axis {
    font-size: 9px;
}
.watermark {
    font-family: "Liberation Serif", serif;
    font-size: 52px;
    fill: #f4f5f8;
    fill-opacity: .8;
    filter: drop-shadow(1.5px 1.5px .3px rgba(60, 60, 70, .8));
}
.watermark .cjk {
    font-family: "Noto Sans CJK SC", sans-serif;
    font-weight: 300;
    font-size: 58px;
}
.sidetabs {
    position: absolute;
    right: 0;
    top: 39px;
    width: 25px;
    border-left: 1px solid #1c1c20;
    border-top: 1px solid #1c1c20;
}
.sidetabs span {
    height: 24px;
    display: flex;
    align-items: center;
    justify-content: center;
    border-bottom: 2px solid #1c1c20;
    background: #a4a6ac;
}
.sidetabs .active {
    background: #eceef1;
}

.doc-bottom {
    height: 16px;
    display: flex;
    border-top: 1px solid #1c1c20;
    background: #dcdfe4;
}
.steps {
    width: 68px;
    padding-left: 2px;
    display: flex;
    gap: 1px;
}
.steps svg {
    width: 15px;
    height: 14px;
    background: #b4b6bb;
    border: 1px solid #a2a4aa;
}
.btab {
    width: 104px;
    height: 14px;
    line-height: 12px;
    padding-right: 7px;
    text-align: center;
    letter-spacing: .2px;
    background: #a4a6ac;
    border: 1px solid #1c1c20;
    border-top: none;
}
.btab.active {
    width: 57px;
    padding: 0;
    border-right: none;
    background: #e6e9ed;
    font-weight: bold;
}

/* task pane */
.taskpane {
    width: 309px;
    display: flex;
    flex-direction: column;
    border-left: 2px solid #1c1c20;
    background: #e1e5ea;
}
.pane-head {
    height: 19px;
    display: flex;
    align-items: center;
    background: #a9aab0;
    border-bottom: 1px solid #1c1c20;
    font-weight: bold;
}
.pane-head .chev {
    margin-left: 8px;
}
.pane-head span {
    width: 124px;
    margin: -2px 76px 0 74px;
    text-align: center;
    letter-spacing: .15px;
}
.pane-head .pin {
    width: 14px;
    height: 14px;
}
.pane-body {
    height: 717px;
    display: flex;
    justify-content: space-between;
    overflow: hidden;
}
.cards {
    width: 270px;
    margin: 5px 0 0 11px;
    display: flex;
    flex-direction: column;
    gap: 22px;
}
.card {
    border: 1px solid #1c1c20;
    background: #d8dbe0;
}
.card h3 {
    height: 23px;
    margin: 0;
    padding: 0 4px;
    display: flex;
    align-items: center;
    justify-content: space-between;
    font-size: 11px;
    letter-spacing: -.15px;
    color: #4b4d54;
    background: #a9aab0;
    border-bottom: 1px solid #1c1c20;
}
.card h3 svg {
    width: 9px;
    height: 9px;
}
.card a {
    height: 25px;
    padding: 0 0 0 3px;
    display: flex;
    align-items: center;
    color: #10102c;
    letter-spacing: .04px;
}
.card a.wide {
    letter-spacing: .18px;
}
.card a.tight {
    letter-spacing: -.17px;
}
.card a svg {
    margin: -4px 4px 0 0;
}
.news {
    padding: 3px 0 6px 23px;
    font-size: 9.5px;
    line-height: 15px;
    letter-spacing: -.03px;
    color: #41709c;
    margin-top: -1px;
}
.news li {
    display: flex;
    align-items: center;
}
.news li::before {
    content: "";
    width: 3px;
    height: 3px;
    margin: 1px 5px 0 -1px;
    border: solid #e08a2a;
    border-width: 1px 1px 0 0;
    transform: rotate(45deg);
}
.news .all {
    margin-top: 2px;
    padding-top: 9px;
    background: linear-gradient(to right, #bbb, #777, transparent) 8px 0 / 118px 1px no-repeat;
}
.community {
    height: 263px;
}
.pane-body .vscroll {
    padding: 8px 0 7px;
}
.pane-body .vscroll .thumb {
    height: 512px;
    margin: 7px 0 auto;
}

/* status bar */
.status {
    height: 18px;
    padding-bottom: 2px;
    display: flex;
    align-items: center;
    letter-spacing: .08px;
    background: #d8dbe0;
}
.edition {
    width: 1040px;
    padding-left: 2px;
}
.s-def {
    width: 94px;
}
.s-edit {
    width: 144px;
    letter-spacing: .25px;
}
.s-unit {
    width: 54px;
    letter-spacing: .5px;
}
.s-help {
    width: 13px;
    height: 13px;
    margin-left: 17px;
    line-height: 11px;
    text-align: center;
    border: 1px solid #1d8c4c;
    background: #e9f7ee;
    color: #1d8c4c;
    font-weight: bold;
}
.tag {
    margin-left: 50px;
}

/* windows taskbar */
.taskbar {
    height: 39px;
    display: flex;
    align-items: center;
    border-top: 1px solid #0c1218;
    color: #fff;
    background:
        linear-gradient(rgba(255, 255, 255, .16), rgba(255, 255, 255, 0) 5px),
        radial-gradient(ellipse 50px 26px at 20px 34px, #0b131b, transparent),
        radial-gradient(ellipse 26px 26px at 262px 30px, #142029, transparent),
        radial-gradient(ellipse 60px 22px at 400px 34px, #15222e, transparent),
        radial-gradient(ellipse 90px 22px at 440px 2px, #4d7a94, transparent),
        radial-gradient(ellipse 80px 28px at 580px 24px, #101920, transparent),
        radial-gradient(ellipse 50px 16px at 690px 34px, #56656f, transparent),
        radial-gradient(ellipse 70px 30px at 800px 20px, #18242d, transparent),
        radial-gradient(ellipse 80px 20px at 960px 30px, #2b3b45, transparent),
        linear-gradient(to right, #34566e 0, #456c86 22%, #3a5c75 33%, #1d2d39 42%, #1f303b 70%, #0d151b 80%, #070a0d);
}
.orb {
    width: 38px;
    height: 38px;
    margin: 0 14px 0 8px;
}
.app {
    width: 59px;
    height: 38px;
    margin-right: 3px;
    display: flex;
    align-items: center;
    justify-content: center;
    border: 1px solid rgba(200, 220, 230, .45);
    border-radius: 3px;
    background: linear-gradient(120deg, rgba(190, 215, 230, .5), rgba(60, 90, 110, .3));
}
.app svg {
    width: 30px;
    height: 30px;
}
.app.bare {
    border-color: transparent;
    background: none;
}
.app .explorer {
    width: 34px;
}
.app.on {
    border-color: rgba(240, 245, 250, .8);
    background: linear-gradient(120deg, rgba(235, 240, 245, .85), rgba(150, 165, 178, .65));
}
.app .sw {
    width: 33px;
    height: 31px;
}
.sw-s,
.sw-w {
    font-weight: bold;
    font-size: 17px;
    fill: #fff;
}
.sw-w {
    font-size: 16px;
}
.tray {
    height: 38px;
    margin-left: auto;
    display: flex;
    align-items: center;
}
.tray .tri {
    margin: 1px 14px 0 17px;
    border-bottom-color: #fff;
}
.lang {
    margin-top: -7px;
}
.tray .t-av {
    margin: 0 8px 0 14px;
}
.tray .t-vol {
    margin: 0 3px 0 8px;
}
.clock {
    width: 70px;
    line-height: 17px;
    margin-top: -1px;
    text-align: center;
}
.peek {
    width: 13px;
    height: 38px;
    border: 1px solid #4a5258;
    background: linear-gradient(135deg, #3a4248, #0b0e10);
}
```
